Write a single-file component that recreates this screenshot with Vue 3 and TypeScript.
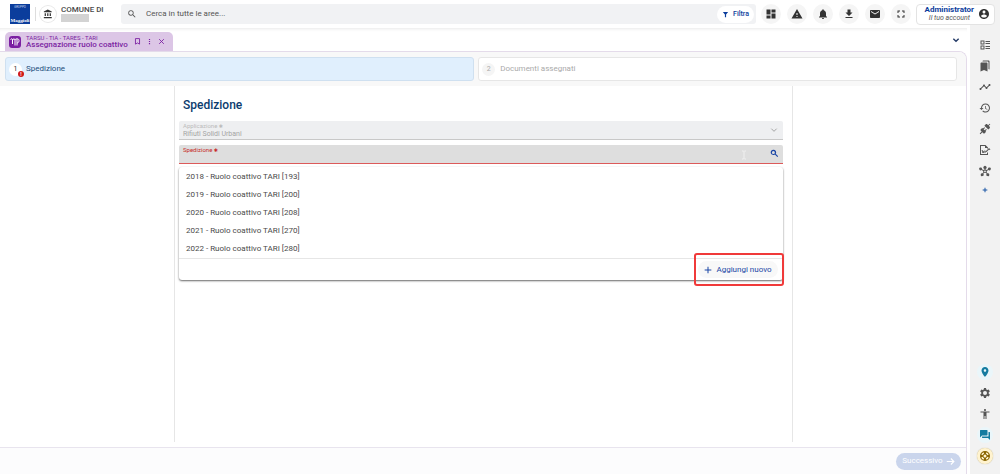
<script setup lang="ts">
import { ref } from 'vue'

interface IconItem { label: string; path: string; tone?: string }

const query = ref('')
const shipment = ref('')
const app = ref('rsu')

const actions: IconItem[] = [
  { label: 'Dashboard', path: 'M3 13h8V3H3v10zm0 8h8v-6H3v6zm10 0h8V11h-8v10zm0-18v6h8V3h-8z' },
  { label: 'Avvisi', path: 'M1 21h22L12 2 1 21zm12-3h-2v-2h2v2zm0-4h-2v-4h2v4z' },
  { label: 'Notifiche', path: 'M12 22c1.100 0 2-.9 2-2h-4c0 1.100.9 2 2 2zm6-6v-5c0-3.070-1.640-5.640-4.500-6.320V4c0-.83-.67-1.500-1.500-1.500s-1.500.67-1.500 1.500v.68C7.630 5.360 6 7.920 6 11v5l-2 2v1h16v-1l-2-2z' },
  { label: 'Scarica', path: 'M19 9h-4V3H9v6H5l7 7 7-7zM5 18v2h14v-2H5z' },
  { label: 'Posta', path: 'M20 4H4c-1.100 0-2 .9-2 2v12c0 1.100.9 2 2 2h16c1.100 0 2-.9 2-2V6c0-1.100-.9-2-2-2zm0 4l-8 5-8-5V6l8 5 8-5v2z' },
  { label: 'Schermo intero', path: 'M7 14H5v5h5v-2H7v-3zm-2-4h2V7h3V5H5v5zm12 7h-3v2h5v-5h-2v3zM14 5v2h3v3h2V5h-5z' }
]

const tools: IconItem[] = [
  { label: 'Elenco', path: 'M3 3h8v8H3V3zm2 2v4h4V5H5zM13 4h9v2h-9V4zm0 4h9v2h-9V8zM3 13h8v8H3v-8zm2 2v4h4v-4H5zm8-1h9v2h-9v-2zm0 4h9v2h-9v-2z' },
  { label: 'Segnalibri', path: 'M19 18l2 1V3c0-1.100-.9-2-2-2H8.990C7.890 1 7 1.900 7 3h10c1.100 0 2 .9 2 2v13zM15 5H5c-1.100 0-2 .9-2 2v16l7-3 7 3V7c0-1.100-.9-2-2-2z' },
  { label: 'Andamento', path: 'M23 8c0 1.100-.9 2-2 2-.18 0-.35-.02-.51-.07l-3.560 3.550c.05.16.07.34.07.52 0 1.100-.9 2-2 2s-2-.9-2-2c0-.18.02-.36.07-.52l-2.550-2.550c-.16.05-.34.07-.52.07s-.36-.02-.52-.07l-4.550 4.560c.05.16.07.33.07.51 0 1.100-.9 2-2 2s-2-.9-2-2 .9-2 2-2c.18 0 .35.02.51.07l4.560-4.550C8.020 9.360 8 9.180 8 9c0-1.100.9-2 2-2s2 .9 2 2c0 .18-.02.36-.07.52l2.550 2.550c.16-.05.34-.07.52-.07s.36.02.52.07l3.550-3.560C19.020 8.350 19 8.180 19 8c0-1.100.9-2 2-2s2 .9 2 2z' },
  { label: 'Cronologia', path: 'M13 3c-4.970 0-9 4.030-9 9H1l3.890 3.890.07.14L9 12H6c0-3.870 3.130-7 7-7s7 3.130 7 7-3.130 7-7 7c-1.930 0-3.680-.79-4.940-2.060l-1.420 1.420C8.270 19.990 10.510 21 13 21c4.970 0 9-4.030 9-9s-4.030-9-9-9zm-1 5v5l4.280 2.540.72-1.210-3.500-2.080V8H12z' },
  { label: 'Connessioni', path: 'M21.400 7.500c.8.800.8 2.100 0 2.800l-2.800 2.800-7.800-7.800 2.800-2.800c.8-.8 2.100-.8 2.800 0l1.800 1.800 3-3 1.400 1.400-3 3 1.800 1.800zM15.600 13.300l-1.400-1.400-2.800 2.800-2.100-2.100 2.800-2.800-1.400-1.400-2.800 2.800-1.500-1.400-2.800 2.800c-.8.800-.8 2.100 0 2.800l1.800 1.800-4 4 1.400 1.400 4-4 1.800 1.800c.8.800 2.100.8 2.800 0l2.800-2.800-1.400-1.500 2.800-2.800z' },
  { label: 'Firma', path: 'M2 2h11l5 5v2h-2V8h-4V4H4v16h12v-3h2v5H2V2zm3 11l2-1 2 3 2-2 3 1 6-6 3 3-2 1-1-1-5 5-4-1-3 3-3-5zM6 17h8v1H6z' },
  { label: 'Relazioni', path: 'M11 7.800a3 3 0 1 1 2 0v1.400c.6.200 1.100.5 1.600.9l3.400-1.800a2.800 2.800 0 1 1 1 1.700l-3.500 1.800c.2 1 .1 1.900-.3 2.700l1.700 2a2.900 2.900 0 1 1-1.600 1.200l-1.600-2c-1.100.5-2.300.5-3.400 0l-1.600 2a2.900 2.900 0 1 1-1.600-1.200l1.700-2c-.4-.8-.5-1.700-.3-2.700L5 10a2.800 2.800 0 1 1 1-1.700l3.400 1.800c.5-.4 1-.7 1.600-.9V7.800zM12 11a1.700 1.700 0 1 0 0 3.400 1.700 1.700 0 0 0 0-3.400z' },
  { label: 'Aggiungi', path: 'M19 13.500h-5.500V19h-3v-5.500H5v-3h5.500V5h3v5.500H19v3z', tone: 'blue' }
]

const helpers: IconItem[] = [
  { label: 'Posizione', tone: 'teal', path: 'M12 2C8.130 2 5 5.130 5 9c0 5.250 7 13 7 13s7-7.750 7-13c0-3.870-3.130-7-7-7zm0 9.500c-1.380 0-2.500-1.120-2.500-2.500s1.120-2.500 2.500-2.500 2.500 1.120 2.500 2.500-1.120 2.500-2.500 2.500z' },
  { label: 'Impostazioni', path: 'M10 2h4l.6 3 2 1.200 3-1 2 3.600-2.300 2v2.400l2.300 2-2 3.600-3-1-2 1.200-.6 3h-4l-.6-3-2-1.200-3 1-2-3.600 2.300-2v-2.400l-2.300-2 2-3.600 3 1 2-1.200.6-3zm2 6a4 4 0 1 0 0 8 4 4 0 0 0 0-8z' },
  { label: 'Accessibilità', path: 'M12 2c1.100 0 2 .9 2 2s-.9 2-2 2-2-.9-2-2 .9-2 2-2zm9 7h-6v13h-2v-6h-2v6H9V9H3V7h18v2z' },
  { label: 'Conversazioni', tone: 'teal', path: 'M21 6h-2v9H6v2c0 .55.45 1 1 1h11l4 4V7c0-.55-.45-1-1-1zm-4 6V3c0-.55-.45-1-1-1H3c-.55 0-1 .45-1 1v14l4-4h10c.55 0 1-.45 1-1z' },
  { label: 'Assistenza', tone: 'gold', path: 'M12 2a10 10 0 1 0 0 20 10 10 0 0 0 0-20zm7.500 7.100l-2.800 1.200a5 5 0 0 0-2.900-3l1.200-2.800a8 8 0 0 1 4.500 4.600zM12 15a3 3 0 1 1 0-6 3 3 0 0 1 0 6zM9.100 4.500l1.200 2.800a5 5 0 0 0-3 3L4.500 9.100a8 8 0 0 1 4.600-4.600zM4.500 14.900l2.800-1.200a5 5 0 0 0 3 3l-1.200 2.800a8 8 0 0 1-4.600-4.600zm10.400 4.600l-1.200-2.800a5 5 0 0 0 3-3l2.800 1.200a8 8 0 0 1-4.600 4.600z' }
]

const options: string[] = [
  '2018 - Ruolo coattivo TARI [193]',
  '2019 - Ruolo coattivo TARI [200]',
  '2020 - Ruolo coattivo TARI [208]',
  '2021 - Ruolo coattivo TARI [270]',
  '2022 - Ruolo coattivo TARI [280]'
]
</script>

<template>
  <div class="page">
    <header class="topbar">
      <svg class="logo" viewBox="0 0 20 20" aria-label="Maggioli">
        <rect width="20" height="20" fill="#0b3d9c" />
        <text x="10" y="4" text-anchor="middle" font-size="3" fill="#c9d6f0">GRUPPO</text>
        <text x="10" y="18" text-anchor="middle" font-size="5" font-weight="700" font-family="Liberation Serif, serif" fill="#fff">Maggioli</text>
      </svg>
      <span class="sep"></span>
      <span class="round bank">
        <svg viewBox="0 0 24 24"><path d="M4 10v7h3v-7H4zm6 0v7h3v-7h-3zM2 22h19v-3H2v3zm14-12v7h3v-7h-3zm-4.500-9L2 6v2h19V6l-9.500-5z" /></svg>
      </span>
      <div class="tenant">
        <span>COMUNE DI</span>
        <span class="redacted"></span>
      </div>
      <div class="search">
        <svg viewBox="0 0 24 24"><path d="M15.500 14h-.79l-.28-.27A6.470 6.470 0 0 0 16 9.500 6.500 6.500 0 1 0 9.500 16c1.610 0 3.090-.59 4.230-1.570l.27.28v.79l5 4.990L20.490 19l-4.990-5zm-6 0C7.010 14 5 11.990 5 9.500S7.010 5 9.500 5 14 7.010 14 9.500 11.990 14 9.500 14z" /></svg>
        <input v-model="query" type="search" aria-label="Cerca in tutte le aree" placeholder="Cerca in tutte le aree..." />
        <button class="filter" type="button">
          <svg viewBox="0 0 24 24"><path d="M3 3h18l-7 9v9h-4v-9L3 3z" /></svg>Filtra
        </button>
      </div>
      <nav class="actions" aria-label="Azioni">
        <button v-for="a in actions" :key="a.label" class="round" type="button" :aria-label="a.label">
          <svg viewBox="0 0 24 24"><path :d="a.path" /></svg>
        </button>
      </nav>
      <button class="account" type="button">
        <span class="who"><strong>Administrator</strong><em>Il tuo account</em></span>
        <svg viewBox="0 0 24 24"><path d="M12 2C6.480 2 2 6.480 2 12s4.480 10 10 10 10-4.480 10-10S17.520 2 12 2zm0 3c1.660 0 3 1.340 3 3s-1.340 3-3 3-3-1.340-3-3 1.340-3 3-3zm0 14.200c-2.500 0-4.710-1.280-6-3.220.03-1.990 4-3.080 6-3.080 1.990 0 5.970 1.090 6 3.080-1.290 1.940-3.500 3.220-6 3.220z" /></svg>
      </button>
    </header>

    <main class="workspace">
      <div class="tabs">
        <div class="tab">
          <svg class="badge" viewBox="0 0 12 12">
            <rect width="12" height="12" rx="3" fill="#7b1fa2" />
            <path d="M1.500 3.500C2 2.500 3.500 2.500 3.500 4v4M3.500 4C4 2.500 6 2.500 6 4v5.500M6 4c.5-1.700 4-1.700 4 .5S8.500 7 8 7M8 3v6.500" fill="none" stroke="#fff" stroke-width="1" />
          </svg>
          <div class="tab-text">
            <small>TARSU - TIA - TARES - TARI</small>
            <strong>Assegnazione ruolo coattivo</strong>
          </div>
          <button type="button" aria-label="Salva nei segnalibri"><svg viewBox="0 0 24 24"><path d="M5 2h14v19l-7-4-7 4V2z" fill="none" stroke="currentColor" stroke-width="3" /></svg></button>
          <button type="button" aria-label="Altro"><svg viewBox="0 0 24 24"><path d="M10 3h4v4h-4zM10 10h4v4h-4zM10 17h4v4h-4z" /></svg></button>
          <button type="button" aria-label="Chiudi"><svg viewBox="0 0 24 24"><path d="M4 4l16 16M20 4L4 20" fill="none" stroke="currentColor" stroke-width="3" /></svg></button>
        </div>
        <button class="more" type="button" aria-label="Mostra schede"><svg viewBox="0 0 24 24"><path d="M4 8l8 8 8-8" fill="none" stroke="currentColor" stroke-width="4" /></svg></button>
      </div>

      <section class="panel">
        <div class="steps">
          <button class="step active" type="button"><span class="num">1<i>!</i></span>Spedizione</button>
          <button class="step" type="button" disabled><span class="num">2</span>Documenti assegnati</button>
        </div>

        <div class="content">
          <form class="sheet" @submit.prevent>
            <h1>Spedizione</h1>
            <div class="field disabled">
              <label for="app">Applicazione <b>✱</b></label>
              <select id="app" v-model="app" disabled>
                <option value="rsu">Rifiuti Solidi Urbani</option>
              </select>
              <svg viewBox="0 0 24 24"><path d="M4 8l8 8 8-8" fill="none" stroke="currentColor" stroke-width="3" /></svg>
            </div>
            <div class="field invalid">
              <label for="shipment">Spedizione <b>✱</b></label>
              <input id="shipment" v-model="shipment" type="text" autocomplete="off" />
              <svg class="caret" viewBox="0 0 6 10"><path d="M1 1h1.500L3 1.500 3.500 1H5M3 1.500v7M1 9h1.500L3 8.500l.5.500H5" fill="none" stroke="#f0f0f0" stroke-width="1" /></svg>
              <svg class="lens" viewBox="0 0 24 24"><path d="M9 2a7 7 0 1 0 4 12.700l6.500 6.800 2.300-2.300-6.600-6.400A7 7 0 0 0 9 2zm0 3a4 4 0 1 1 0 8 4 4 0 0 1 0-8z" /></svg>
              <div class="menu">
                <ul role="listbox" aria-label="Spedizione">
                  <li v-for="o in options" :key="o" role="option">{{ o }}</li>
                </ul>
                <div class="menu-foot">
                  <button type="button"><svg viewBox="0 0 24 24"><path d="M22 13.500h-8.500V22h-3v-8.500H2v-3h8.500V2h3v8.500H22z" /></svg>Aggiungi nuovo</button>
                  <span class="highlight"></span>
                </div>
              </div>
            </div>
          </form>
        </div>

        <footer class="foot">
          <button type="button" disabled>Successivo<svg viewBox="0 0 24 24"><path d="M2 12h19M13 4l8 8-8 8" fill="none" stroke="currentColor" stroke-width="3" /></svg></button>
        </footer>
      </section>
    </main>

    <aside class="rail">
      <button v-for="t in tools" :key="t.label" type="button" :class="t.tone" :aria-label="t.label"><svg viewBox="0 0 24 24"><path :d="t.path" /></svg></button>
      <span class="grow"></span>
      <button v-for="t in helpers" :key="t.label" type="button" :class="t.tone" :aria-label="t.label"><svg viewBox="0 0 24 24"><path :d="t.path" fill-rule="evenodd" /></svg></button>
    </aside>
  </div>
</template>

<style>
body { margin: 0; }
</style>

<style scoped>
* { box-sizing: border-box; }
button, input, select { font: inherit; color: inherit; border: 0; background: none; padding: 0; margin: 0; outline: 0; }
svg { fill: currentColor; flex: none; display: block; }
.page {
  min-height: 100vh;
  display: grid;
  grid-template: 28px 1fr / minmax(0, 1fr) 30px;
  font: 8px/10px Roboto, sans-serif;
  color: #4a4a4a;
  background: #fff;
}
.topbar {
  grid-area: 1 / 1 / 2 / 3;
  z-index: 2;
  display: flex;
  align-items: center;
  padding: 0 5px 0 10px;
  background: linear-gradient(to left, transparent 30px, #fff 30px);
}
.logo { width: 20px; height: 20px; }
.sep { width: 1px; height: 14px; margin: 0 4px 0 5px; background: #ddd; }
.round { width: 20px; height: 20px; border-radius: 50%; background: #f5f5f5; display: grid; place-items: center; color: #333; }
.round svg { width: 12px; height: 12px; }
.bank { width: 16px; height: 16px; background: #fff; box-shadow: 0 0 0 1px #e8e8e8; }
.bank svg { width: 10px; height: 10px; }
.tenant { width: 60px; margin-left: 5px; font-weight: 500; line-height: 8px; }
.tenant span { display: block; white-space: nowrap; }
.tenant .redacted { width: 28px; height: 8px; background: #d3d3d3; }
.search { flex: 1; height: 20px; display: flex; align-items: center; gap: 9px; padding: 0 2px 0 6px; background: #f1f2f4; border-radius: 3px; }
.search > svg { width: 10px; height: 10px; color: #555; }
.search input { flex: 1; min-width: 0; appearance: none; }
.search input::placeholder { color: #555; opacity: 1; }
.filter { height: 17px; width: 37px; display: flex; align-items: center; justify-content: center; gap: 4px; border-radius: 9px; background: #fff; color: #0b3d9c; font-size: 7px; font-weight: 500; }
.filter svg { width: 7px; height: 7px; }
.actions { display: flex; gap: 6px; margin: 0 5px 0 5px; }
.account { height: 21px; width: 79px; display: flex; align-items: center; justify-content: flex-end; gap: 4px; padding: 0 4px; background: #fff; border: 1px solid #e3e3e3; border-radius: 4px; color: #333; }
.account svg { width: 12px; height: 12px; }
.who { display: flex; flex-direction: column; align-items: flex-end; line-height: 8px; }
.who strong { font-weight: 700; color: #0b3d9c; }
.who em { font-size: 7px; color: #555; padding-right: 4px; }

.workspace { grid-area: 2 / 1; display: flex; flex-direction: column; min-width: 0; padding-right: 3px; }
.tabs { height: 23px; display: flex; align-items: flex-end; justify-content: space-between; padding: 0 7px 0 5px; box-shadow: inset 0 4px 4px -4px #ddd; }
.tab { height: 19px; width: 168px; display: flex; align-items: center; gap: 5px; padding: 0 8px 0 4px; background: #dcc6e6; border-radius: 5px 5px 0 0; color: #7b1fa2; }
.badge { width: 12px; height: 12px; }
.tab-text { flex: 1; min-width: 0; line-height: 7px; white-space: nowrap; }
.tab-text small, .tab-text strong { display: block; }
.tab-text small { font-size: 6px; }
.tab-text strong { font-weight: 500; line-height: 8px; }
.tab button { width: 7px; height: 7px; }
.tab button svg { width: 7px; height: 7px; }
.more { width: 8px; height: 8px; align-self: center; color: #233a66; }
.more svg { width: 8px; height: 8px; }

.panel { flex: 1; display: flex; flex-direction: column; border: solid #e4dbea; border-width: 1px 1px 0 0; border-top-right-radius: 8px; overflow: hidden; }
.steps { display: grid; grid-template-columns: 98fr 100fr; gap: 4px; padding: 5px 9px 5px 5px; background: #f8f8f8; }
.step { height: 24px; display: flex; align-items: center; gap: 5px; padding: 0 3px; background: #fff; border: 1px solid #e6e6e6; border-radius: 3px; color: #aaa; }
.step.active { background: #e0effd; border-color: #cfe0f0; color: #1d4e7c; gap: 4px; }
.num { position: relative; width: 13px; height: 13px; border-radius: 50%; background: #f5f5f5; display: grid; place-items: center; font-size: 7px; }
.active .num { background: #fff; color: #333; }
.num i { position: absolute; right: -2px; bottom: -1px; width: 6px; height: 6px; border-radius: 50%; background: #d01818; color: #fff; font: 700 5px/6px Roboto, sans-serif; text-align: center; }

.content { flex: 1; display: flex; padding: 0 173px 5px 174px; }
.sheet { flex: 1; min-width: 0; padding: 12px 9px 0 4px; border: solid #e6e6e6; border-width: 0 1px; }
h1 { margin: 0 0 9px 4px; font-size: 12px; line-height: 14px; font-weight: 500; color: #0c3c6e; }
.field { position: relative; height: 19px; margin-bottom: 5px; display: flex; flex-direction: column; justify-content: center; padding: 0 4px; border-radius: 2px 2px 0 0; border-bottom: 1px solid #c8c8c8; background: #eeeff1; color: #a4a4a4; font-size: 7px; }
.field label { font-size: 6px; line-height: 7px; }
.field label b { font-weight: 400; font-size: 5px; font-family: "DejaVu Sans", sans-serif; }
.field select, .field input { display: block; width: 100%; height: 9px; line-height: 9px; appearance: none; opacity: 1; }
.disabled label { color: #bbb; }
.field > svg { position: absolute; right: 5px; top: 5px; width: 8px; height: 8px; }
.invalid { background: #dedede; border-color: #dc5a5a; color: #1a46a5; }
.invalid label { color: #c62828; }
.field > .lens { right: 4px; top: 4px; width: 9px; height: 9px; }
.field > .caret { right: 36px; width: 6px; height: 10px; }
.menu { position: absolute; z-index: 1; left: 0; right: 0; top: 22px; background: #fff; border-radius: 3px; box-shadow: 0 1px 2px #0009; color: #4a4a4a; font-size: 8px; }
.menu ul { list-style: none; margin: 0; padding: 1px 0 0; }
.menu li { height: 18px; line-height: 18px; padding-left: 7px; }
.menu-foot { position: relative; height: 22px; padding: 2px 5px; border-top: 1px solid #e6e6e6; display: flex; justify-content: flex-end; }
.menu-foot button { width: 80px; height: 17px; display: flex; align-items: center; justify-content: center; gap: 4px; border-radius: 9px; background: #f8f8f8; color: #1a46a5; }
.menu-foot svg { width: 8px; height: 8px; }
.highlight { position: absolute; right: -1px; top: -6px; width: 90px; height: 33px; border: 2px solid #f03a3a; border-radius: 3px; pointer-events: none; }

.foot { height: 27px; display: flex; align-items: center; justify-content: flex-end; padding-right: 5px; border-top: 1px solid #e8e4ee; background: #fcfcfd; }
.foot button { height: 17px; width: 65px; display: flex; align-items: center; justify-content: center; gap: 3px; border-radius: 9px; background: #cad5ec; color: #fff; }
.foot svg { width: 9px; height: 9px; }

.rail { grid-area: 1 / 2 / 3 / 3; display: flex; flex-direction: column; align-items: center; gap: 5px; padding: 37px 1px 10px 0; background: #f2f2f2; color: #555; }
.rail button { width: 16px; height: 16px; display: grid; place-items: center; border-radius: 50%; }
.rail svg { width: 12px; height: 12px; }
.rail .blue { height: 12px; color: #1a56a5; }
.rail .blue svg { width: 8px; height: 8px; }
.rail .teal { color: #147ba0; background: #eaf6fa; }
.rail .gold { color: #8a6500; background: #fff3cf; box-shadow: 0 0 1px #b9a878; }
.grow { flex: 1; }
</style>
